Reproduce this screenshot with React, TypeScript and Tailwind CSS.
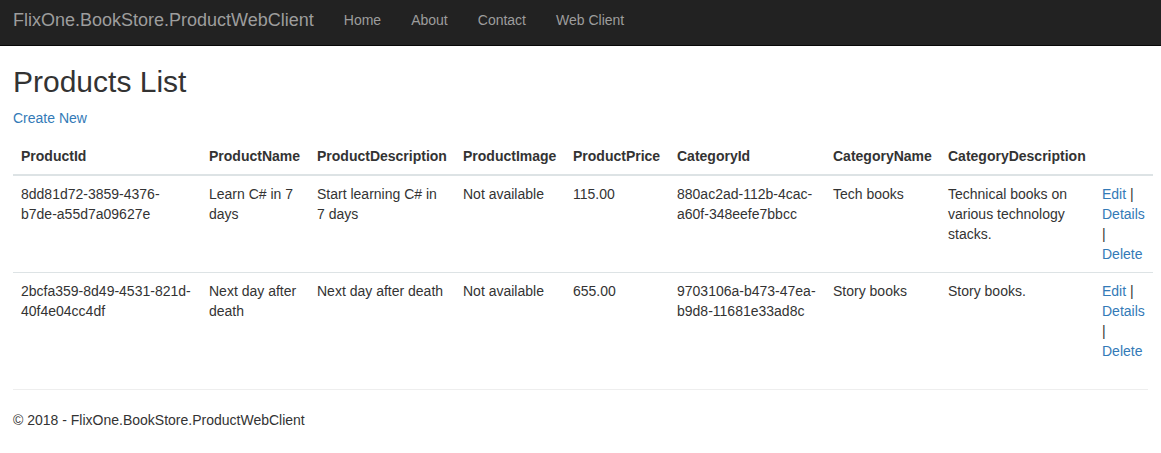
const products = [
  {
    id: "8dd81d72-3859-4376-b7de-a55d7a09627e",
    name: "Learn C# in 7 days",
    description: "Start learning C# in 7 days",
    image: "Not available",
    price: "115.00",
    categoryId: "880ac2ad-112b-4cac-a60f-348eefe7bbcc",
    categoryName: "Tech books",
    categoryDescription: "Technical books on various technology stacks.",
  },
  {
    id: "2bcfa359-8d49-4531-821d-40f4e04cc4df",
    name: "Next day after death",
    description: "Next day after death",
    image: "Not available",
    price: "655.00",
    categoryId: "9703106a-b473-47ea-b9d8-11681e33ad8c",
    categoryName: "Story books",
    categoryDescription: "Story books.",
  },
];

const headers = [
  "ProductId",
  "ProductName",
  "ProductDescription",
  "ProductImage",
  "ProductPrice",
  "CategoryId",
  "CategoryName",
  "CategoryDescription",
  "",
];

const widths = ["w-[188px]", "w-[108px]", "w-[146px]", "w-[110px]", "w-[104px]", "w-[156px]", "w-[115px]", "w-[154px]", "w-[59px]"];

const Navbar = () => {
  return (
    <div className="h-[46px] bg-[#222222] border-b border-[#080808] px-[13px] flex items-start pt-[10px]">
      <a className="text-[18px] leading-[20px] text-[#9d9d9d] pr-[15px]">FlixOne.BookStore.ProductWebClient</a>
      {["Home", "About", "Contact", "Web Client"].map((item) => (
        <a key={item} className="px-[15px] text-[14px] leading-[20px] text-[#9d9d9d]">
          {item}
        </a>
      ))}
    </div>
  );
};

export default function App() {
  return (
    <div className="min-h-[453px] bg-white text-[#333333] text-[14px] leading-[20px]" style={{ fontFamily: '"Liberation Sans", Arial, sans-serif' }}>
      <Navbar />
      <div className="px-[13px]">
        <h2 className="mt-[19px] mb-[10px] text-[30px] leading-[33px] font-normal">Products List</h2>
        <p className="mb-[10px]">
          <a className="text-[#337ab7]">Create New</a>
        </p>
        <table className="w-[1140px] table-fixed border-collapse mb-[20px]">
          <colgroup>
            {widths.map((w, i) => (
              <col key={i} className={w} />
            ))}
          </colgroup>
          <thead>
            <tr>
              {headers.map((h, i) => (
                <th key={i} className="p-[8px] text-left font-bold align-bottom border-b-2 border-[#dde3e5]">
                  {h}
                </th>
              ))}
            </tr>
          </thead>
          <tbody>
            {products.map((p) => (
              <tr key={p.id} className="border-t border-[#dde3e5] align-top">
                <td className="p-[8px]">{p.id}</td>
                <td className="p-[8px]">{p.name}</td>
                <td className="p-[8px]">{p.description}</td>
                <td className="p-[8px]">{p.image}</td>
                <td className="p-[8px]">{p.price}</td>
                <td className="p-[8px]">{p.categoryId}</td>
                <td className="p-[8px]">{p.categoryName}</td>
                <td className="p-[8px]">{p.categoryDescription}</td>
                <td className="p-[8px]">
                  <a className="text-[#337ab7]">Edit</a> | <a className="text-[#337ab7]">Details</a> |{" "}
                  <a className="text-[#337ab7]">Delete</a>
                </td>
              </tr>
            ))}
          </tbody>
        </table>
        <hr className="border-0 border-t border-[#eeeeee] mb-[20px]" />
        <footer>
          <p className="mb-[10px]">© 2018 - FlixOne.BookStore.ProductWebClient</p>
        </footer>
      </div>
    </div>
  );
}
